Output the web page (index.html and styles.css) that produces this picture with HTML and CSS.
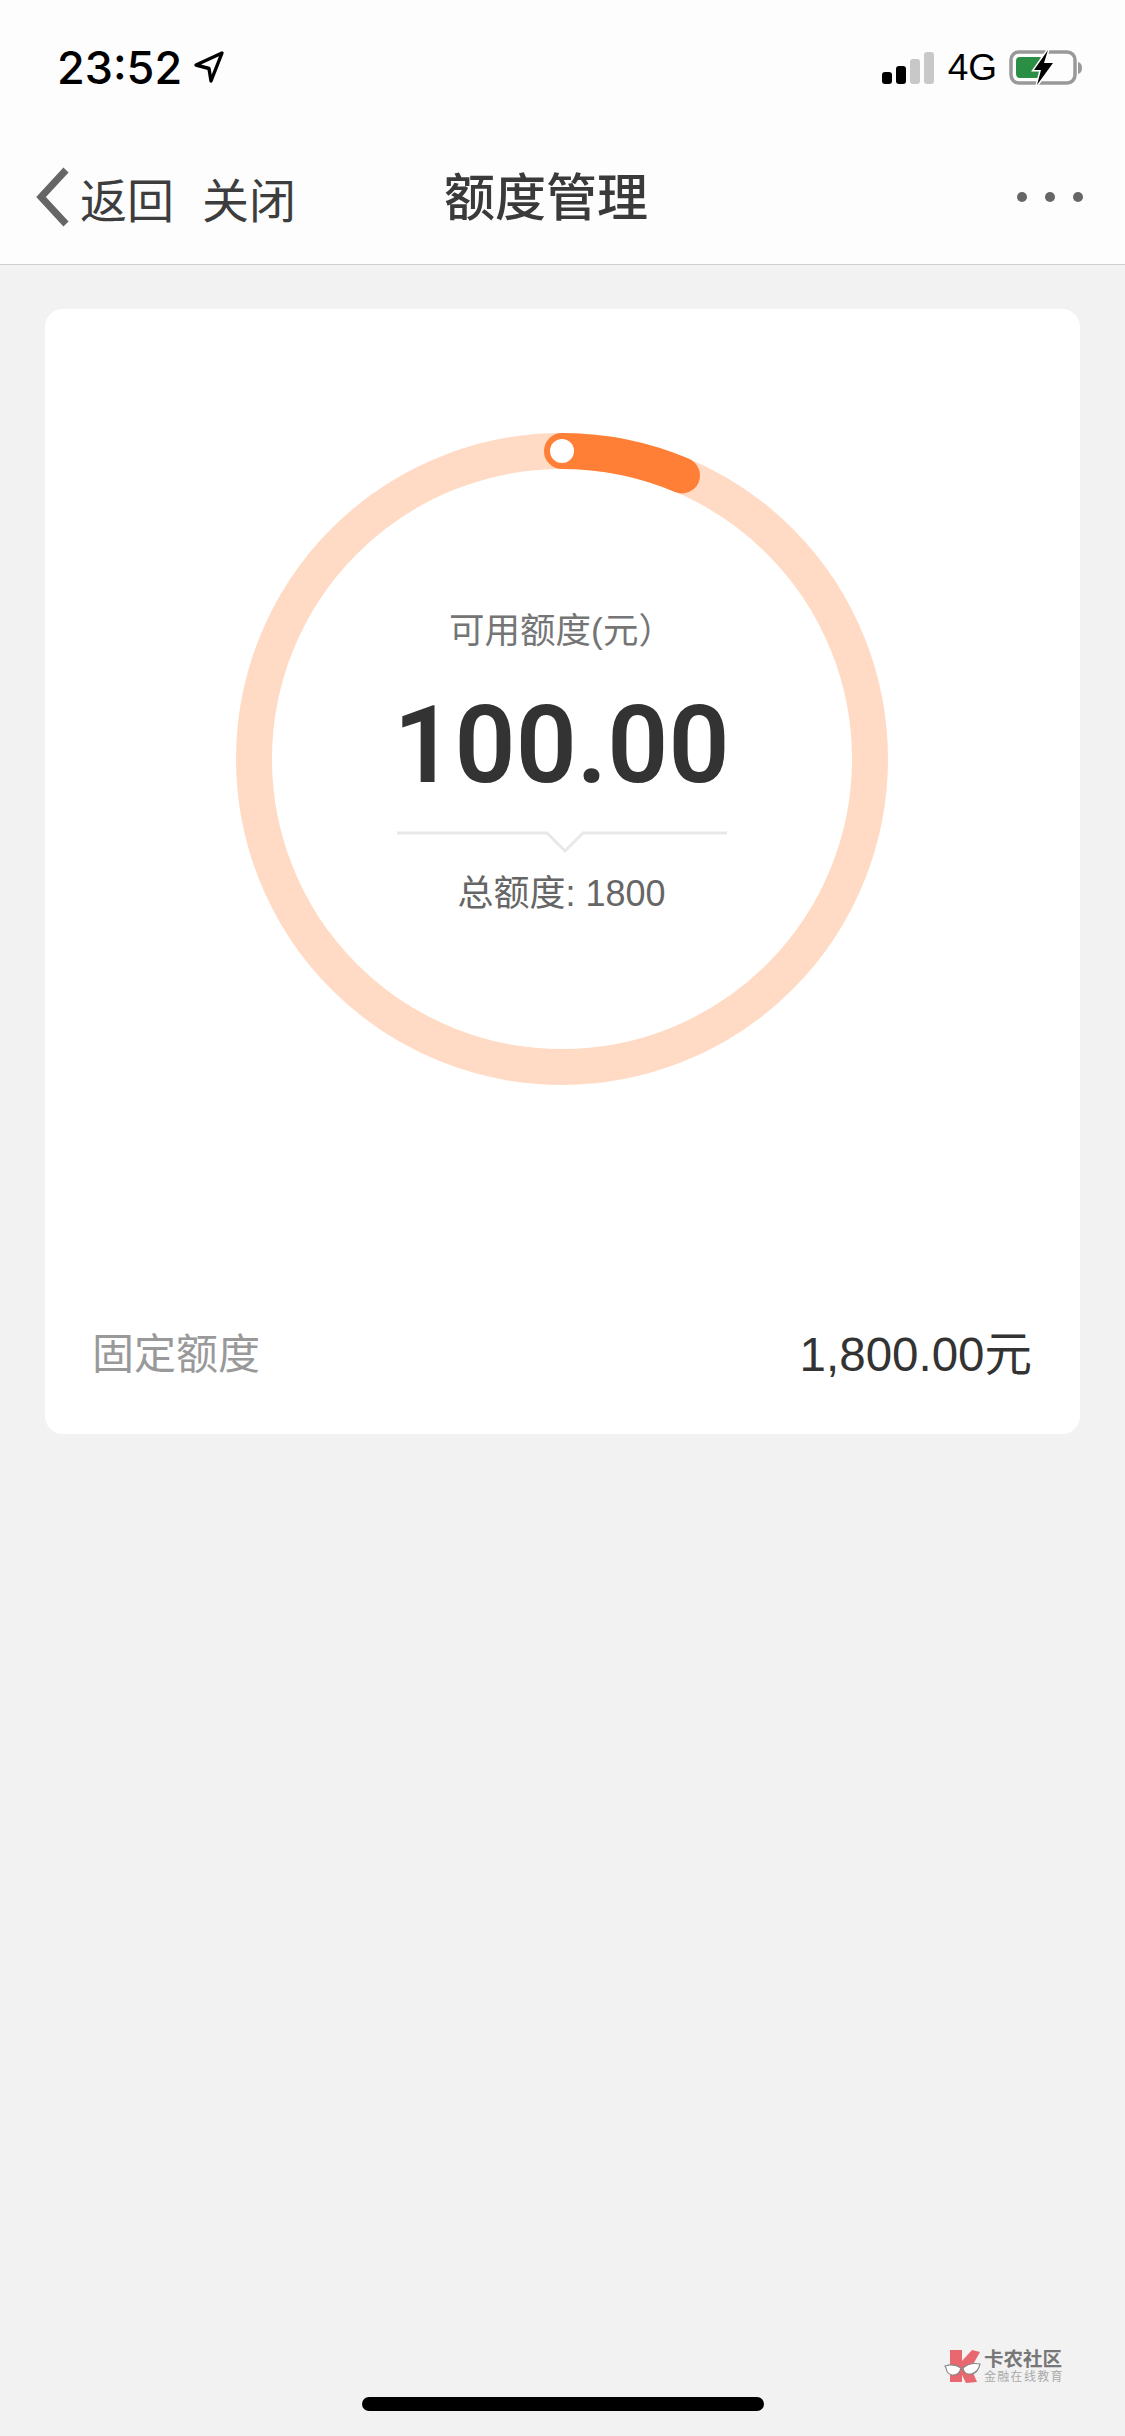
FILE: index.html
```html
<!DOCTYPE html>
<html lang="zh-CN">
<head>
  <meta charset="UTF-8" />
  <meta name="viewport" content="width=device-width, initial-scale=1.0" />
  <title>额度管理</title>
  <link rel="stylesheet" href="styles.css">
</head>
<body>
  <div class="page">
    <div class="header">
      <div class="status-bar">
        <div class="status-left">
          <span class="time">23:52</span>
          <svg class="loc-arrow" width="32" height="34" viewBox="0 0 32 34">
            <path d="M29 3 L3 15 L16 18.5 L18 31 Z" fill="none" stroke="#000" stroke-width="3.4" stroke-linejoin="round" />
          </svg>
        </div>
        <div class="status-right">
          <div class="signal">
            <span class="bar bar1"></span>
            <span class="bar bar2"></span>
            <span class="bar bar3"></span>
            <span class="bar bar4"></span>
          </div>
          <span class="network">4G</span>
          <svg class="battery" width="74" height="36" viewBox="0 0 74 36">
            <rect x="2" y="2" width="64" height="31" rx="8" fill="none" stroke="#999" stroke-width="3.5" />
            <path d="M69 12 Q73 13 73 18 Q73 23 69 24 Z" fill="#999" />
            <rect x="7" y="7" width="27" height="21" rx="4" fill="#2a8f44" />
            <path d="M39 0 L25 20 L32 20 L28 35 L44 13 L35 13 Z" fill="#000" stroke="#fff" stroke-width="3" paint-order="stroke" />
          </svg>
        </div>
      </div>
      <div class="nav-bar">
        <svg class="back-icon" width="36" height="60" viewBox="0 0 36 60">
          <path d="M30 3 L5 30 L30 57" fill="none" stroke="#666" stroke-width="7" />
        </svg>
        <span class="nav-link">返回</span>
        <span class="nav-link nav-close">关闭</span>
        <span class="nav-title">额度管理</span>
        <div class="more">
          <span class="dot"></span>
          <span class="dot"></span>
          <span class="dot"></span>
        </div>
      </div>
    </div>

    <div class="content">
      <div class="card">
        <div class="ring-wrap">
          <svg class="ring" width="660" height="660" viewBox="0 0 660 660">
            <circle cx="330" cy="330" r="308" fill="none" stroke="#ffdbc5" stroke-width="36" />
            <path d="M330 22 A308 308 0 0 1 450 46.400" fill="none" stroke="#ff7f36" stroke-width="36" stroke-linecap="round" />
            <circle cx="330" cy="22" r="12" fill="#fff" />
          </svg>
          <div class="ring-text">
            <div class="ring-label">可用额度(元）</div>
            <div class="ring-value">100.00</div>
            <div class="divider">
              <svg width="330" height="24" viewBox="0 0 330 24">
                <path d="M0 2 H150 L168 20 L186 2 H330" fill="none" stroke="#e8e8e8" stroke-width="3" />
              </svg>
            </div>
            <div class="ring-total">总额度: 1800</div>
          </div>
        </div>
        <div class="quota-row">
          <span class="quota-name">固定额度</span>
          <span class="quota-amount">1,800.00元</span>
        </div>
      </div>
    </div>

    <div class="home-bar"></div>

    <div class="watermark">
      <svg width="38" height="36" viewBox="0 0 38 36">
        <path d="M6 2 H18 V13 L28 2 L36 4 L27 20 L33 34 L22 35 L18 27 V34 H6 Z" fill="#e9686f" />
        <path d="M1 18 Q10 15 17 20 Q15 28 8 27 Q3 26 2 20 Z M19 20 Q26 14 36 16 Q34 25 27 26 Q20 27 19 20 Z" fill="#fff" stroke="#888" stroke-width="1.200" />
      </svg>
      <div class="wm-text">
        <div class="wm-name">卡农社区</div>
        <div class="wm-sub">金融在线教育</div>
      </div>
    </div>
  </div>
</body>
</html>
```

FILE: styles.css
```css
* {
  box-sizing: border-box;
}
body {
  margin: 0;
  font-family: "Liberation Sans", "Noto Sans CJK SC", sans-serif;
  background: #f2f2f2;
}
.page {
  position: relative;
  width: 1125px;
  height: 2436px;
  display: flex;
  flex-direction: column;
  overflow: hidden;
}

/* header */
.header {
  height: 265px;
  background: #fdfdfd;
  border-bottom: 1px solid #cfcfcf;
}
.status-bar {
  height: 136px;
  padding: 0 42px 0 57px;
  display: flex;
  justify-content: space-between;
  align-items: center;
}
.status-left {
  display: flex;
  align-items: center;
  gap: 11px;
  margin-bottom: 2px;
}
.time {
  font-family: Inter, sans-serif;
  font-size: 45px;
  font-weight: 500;
  color: #000;
}
.status-right {
  display: flex;
  align-items: center;
}
.signal {
  display: flex;
  align-items: flex-end;
  gap: 4px;
  height: 32px;
}
.bar {
  width: 10px;
  border-radius: 3px;
}
.bar1 { height: 12px; background: #000; }
.bar2 { height: 18px; background: #000; }
.bar3 { height: 25px; background: #c8c8c8; }
.bar4 { height: 32px; background: #c8c8c8; }
.network {
  margin: 0 12px 0 14px;
  font-size: 37px;
  color: #000;
}
.nav-bar {
  height: 128px;
  padding: 0 0 6px 36px;
  display: flex;
  align-items: center;
}
.back-icon {
  margin-right: 8px;
}
.nav-link {
  font-size: 47px;
  color: #3d3d3d;
}
.nav-close {
  margin-left: 28px;
}
.nav-title {
  margin-left: 148px;
  margin-bottom: 6px;
  font-size: 51px;
  font-weight: 500;
  color: #3a3a3a;
}
.more {
  margin-left: auto;
  margin-right: 42px;
  display: flex;
  gap: 18px;
}
.dot {
  width: 10px;
  height: 10px;
  border-radius: 50%;
  background: #666;
}

/* card */
.content {
  flex: 1;
  padding: 44px 45px 0;
}
.card {
  height: 1125px;
  background: #fff;
  border-radius: 18px;
  padding-top: 120px;
  display: flex;
  flex-direction: column;
}
.ring-wrap {
  width: 660px;
  height: 660px;
  margin: 0 auto;
  transform: translateX(-1px);
  display: grid;
}
.ring, .ring-text {
  grid-area: 1 / 1;
}
.ring-text {
  padding-top: 178px;
  display: flex;
  flex-direction: column;
  align-items: center;
}
.ring-label {
  font-size: 35.500px;
  line-height: 48px;
  color: #757575;
}
.ring-value {
  margin-top: 29px;
  font-family: Roboto, "Liberation Sans", sans-serif;
  font-size: 107px;
  line-height: 124px;
  font-weight: 600;
  color: #333;
}
.divider {
  margin-top: 23px;
  height: 24px;
}
.divider svg {
  display: block;
}
.ring-total {
  margin-top: 15px;
  font-size: 36px;
  line-height: 48px;
  color: #666;
}
.quota-row {
  margin-top: auto;
  height: 162px;
  padding: 0 48px 6px 47px;
  display: flex;
  justify-content: space-between;
  align-items: center;
}
.quota-name {
  font-size: 42px;
  color: #999;
}
.quota-amount {
  font-size: 47.500px;
  color: #333;
}

/* bottom */
.home-bar {
  width: 402px;
  height: 14px;
  margin: 0 auto 25px;
  border-radius: 7px;
  background: #000;
}
.watermark {
  position: absolute;
  left: 944px;
  top: 2348px;
  display: flex;
  align-items: center;
  gap: 2px;
}
.wm-name {
  font-size: 19.500px;
  line-height: 22px;
  font-weight: 700;
  color: #777;
}
.wm-sub {
  font-size: 12px;
  line-height: 14px;
  letter-spacing: 1.300px;
  color: #aaa;
}
```
